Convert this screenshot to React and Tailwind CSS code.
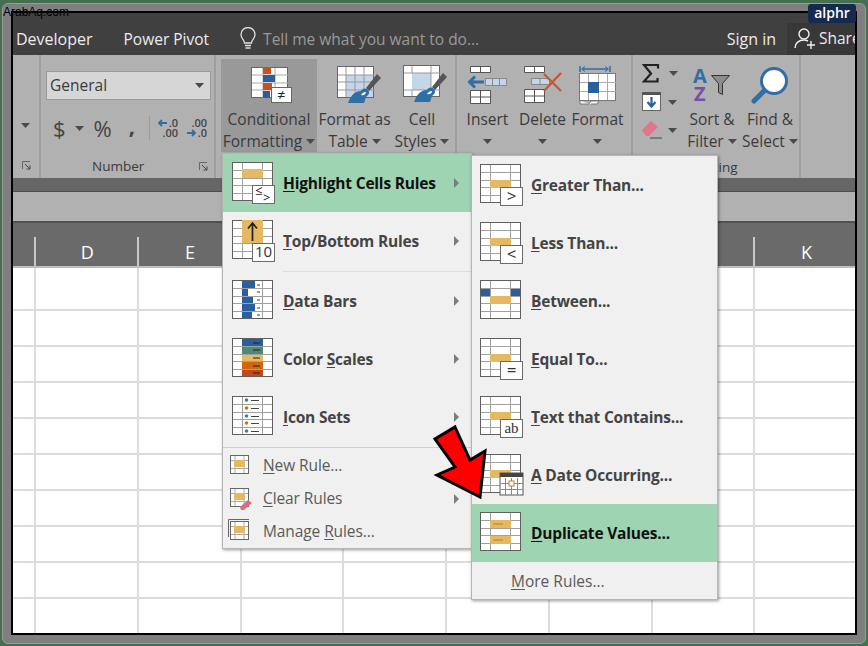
const columns = ['C', 'D', 'E', 'F', 'G', 'H', 'I', 'J', 'K']
const rows = Array.from({ length: 10 })
const ORANGE = '#e5b863'
const BLUE = '#2a5f9e'

function Caret({ className = '' }) {
  return (
    <svg width="9" height="5" viewBox="0 0 9 5" className={className}>
      <path d="M0 0h9L4.500 5z" fill="#4a4a4a" />
    </svg>
  )
}

function Launcher({ className = '' }) {
  return (
    <svg width="9" height="9" viewBox="0 0 9 9" className={className}>
      <path d="M.5 8V.5H8" fill="none" stroke="#666" />
      <path d="M3 3l5 5M8 4.500V8H4.500" fill="none" stroke="#444" />
    </svg>
  )
}

// spreadsheet thumbnail used by every menu row
function Sheet({ children }) {
  return (
    <svg width="44" height="42" viewBox="0 0 44 42" className="shrink-0">
      <rect x=".5" y=".5" width="40" height="38" fill="#fff" />
      <path d="M10.500 1v38M30.500 1v38M1 8.500h40M1 16.500h40M1 23.500h40M1 31.500h40" stroke="#a0a0a0" fill="none" />
      <rect x=".5" y=".5" width="40" height="38" fill="none" stroke="#5f5f5f" />
      {children}
    </svg>
  )
}

function Badge({ label, size = 15, family = 'Open Sans', dy = 0 }) {
  return (
    <g>
      <rect x="20.500" y="23.500" width="22" height="18" fill="#fff" stroke="#6b6b6b" />
      <text x="31.500" y={37 + dy} textAnchor="middle" fontSize={size} fontFamily={family} fill="#333">{label}</text>
    </g>
  )
}

const Bar = ({ y = 16, h = 8 }) => <rect x="10" y={y} width="21" height={h} fill={ORANGE} />

const icons = {
  highlight: (
    <Sheet>
      <Bar y={7} h={9} />
      <rect x="20.500" y="23.500" width="22" height="18" fill="#fff" stroke="#6b6b6b" />
      <text x="23" y="33" fontSize="13" fontFamily="Open Sans" fill="#222">≤</text>
      <text x="31" y="40" fontSize="13" fontFamily="Open Sans" fill="#222">&gt;</text>
    </Sheet>
  ),
  top: (
    <Sheet>
      <rect x="10" y="0" width="21" height="23" fill={ORANGE} />
      <path d="M20.500 21V4M16 8.500L20.500 3l4.500 5.500" stroke="#222" strokeWidth="1.700" fill="none" />
      <Badge label="10" size={15} />
    </Sheet>
  ),
  bars: (
    <Sheet>
      <rect x="10" y="1" width="13" height="7" fill={BLUE} />
      <rect x="10" y="9" width="6" height="7" fill={BLUE} />
      <rect x="10" y="17" width="11" height="6" fill={BLUE} />
      <rect x="10" y="24" width="13" height="7" fill={BLUE} />
      <rect x="10" y="32" width="10" height="6" fill={BLUE} />
      <path d="M25 5h3M25 12h3M25 20h3M25 28h3M25 35h3" stroke="#333" />
    </Sheet>
  ),
  scales: (
    <Sheet>
      <rect x="10" y="1" width="21" height="7" fill={BLUE} />
      <rect x="10" y="9" width="21" height="7" fill="#4b8a75" />
      <rect x="10" y="17" width="21" height="6" fill={ORANGE} />
      <rect x="10" y="24" width="21" height="7" fill="#d2660f" />
      <rect x="10" y="32" width="21" height="6" fill="#bf4a20" />
      <path d="M21 5h7M21 12h7M21 20h7M21 28h7M21 35h7" stroke="#222" />
    </Sheet>
  ),
  sets: (
    <Sheet>
      {[4, 12, 20, 27, 35].map((y, i) => (
        <g key={y}>
          <circle cx="14.500" cy={y} r="1.800" fill={i % 2 ? '#c9741b' : '#3f8a6d'} />
          <path d={`M19 ${y + 0.5}h8`} stroke="#444" />
        </g>
      ))}
    </Sheet>
  ),
  greater: (
    <Sheet>
      <Bar />
      <Badge label=">" size={17} dy={1} />
    </Sheet>
  ),
  less: (
    <Sheet>
      <Bar />
      <Badge label="<" size={17} dy={1} />
    </Sheet>
  ),
  between: (
    <Sheet>
      <rect x="1" y="9" width="9" height="7" fill={BLUE} />
      <rect x="31" y="9" width="9" height="7" fill={BLUE} />
      <Bar />
    </Sheet>
  ),
  equal: (
    <Sheet>
      <Bar />
      <Badge label="=" size={17} dy={1} />
    </Sheet>
  ),
  contains: (
    <Sheet>
      <Bar />
      <Badge label="ab" size={15} family="Liberation Serif" />
    </Sheet>
  ),
  date: (
    <Sheet>
      <Bar />
      <rect x="20" y="19" width="23" height="22" fill="#fff" stroke="#555" />
      <rect x="20" y="19" width="23" height="4" fill="#444" />
      <path d="M25.500 24v17M31.500 24v17M37.500 24v17M21 29.500h22M21 35.500h22" stroke="#888" />
      <rect x="29" y="27" width="5" height="5" fill="#fff" stroke="#d2762a" />
    </Sheet>
  ),
  duplicate: (
    <Sheet>
      <Bar y={8} />
      <Bar y={24} />
      <path d="M13 12h10M13 28h10" stroke="#a98238" />
    </Sheet>
  ),
}

function SmallSheet({ variant }) {
  return (
    <svg width="26" height="26" viewBox="0 0 26 26" className="shrink-0">
      {variant === 'manage' && <path d="M.5 18V.5H21" fill="none" stroke="#666" />}
      <rect x="2.500" y="2.500" width="18" height="18" fill="#fff" stroke="#666" />
      <path d="M7 3v17M16 3v17M3 7.500h17M3 15.500h17" stroke="#aaa" fill="none" />
      <rect x="6" y="7" width="11" height="7" fill={ORANGE} />
      {variant === 'clear' && <path d="M12 21l8-7 4 3-8 7h-3z" fill="#dc6c80" />}
    </svg>
  )
}

function MenuRow({ icon, hotkey, before = '', rest, arrow, active, sub }) {
  return (
    <div className={`flex h-[58px] shrink-0 items-center ${sub ? 'pl-[8px]' : 'pl-[9px]'} ${active ? 'bg-[#9fd4b2] text-[#111]' : 'text-[#444]'}`}>
      {icons[icon]}
      <span className="ml-[7px] mt-[2px] text-[15.5px] font-bold tracking-[-0.2px]">
        {before}<u className="underline-offset-2">{hotkey}</u>{rest}
      </span>
      {arrow && <span className="ml-auto mr-[12px] h-0 w-0 border-y-[5px] border-l-[5px] border-y-transparent border-l-[#7c7c7c]" />}
    </div>
  )
}

function SmallRow({ variant, hotkey, before = '', rest, arrow }) {
  return (
    <div className="flex h-[33px] shrink-0 items-center pl-[5px] text-[15.5px] text-[#5a5a5a]">
      <SmallSheet variant={variant} />
      <span className="ml-[9px] tracking-[-0.1px]">{before}<u className="underline-offset-2">{hotkey}</u>{rest}</span>
      {arrow && <span className="ml-auto mr-[12px] h-0 w-0 border-y-[5px] border-l-[5px] border-y-transparent border-l-[#7c7c7c]" />}
    </div>
  )
}

function RibbonButton({ icon, first, second, className = '', iconClass = '', active }) {
  return (
    <div className={`flex h-[93px] flex-col items-center text-[15.5px] leading-[22px] text-[#3a3a3a] ${active ? 'bg-[#999999]' : ''} ${className}`}>
      <div className={`flex h-[50px] w-full items-center justify-center pt-[3px] ${iconClass}`}>{icon}</div>
      <span className="whitespace-nowrap">{first}</span>
      <span className="flex h-[22px] items-center gap-[4px] whitespace-nowrap">
        {second}
        <Caret />
      </span>
    </div>
  )
}

const CondIcon = (
  <svg width="42" height="37" viewBox="0 0 42 37">
    <rect x=".5" y=".5" width="36" height="30" fill="#fff" stroke="#666" />
    <path d="M12 1v30M24 1v30M1 8h36M1 16h36M1 23h36" stroke="#aaa" />
    <rect x="12" y="0" width="8" height="7" fill="#c8511f" />
    <rect x="12" y="8" width="12" height="7" fill={BLUE} />
    <rect x="12" y="16" width="9" height="7" fill="#c8511f" />
    <rect x="12" y="24" width="7" height="7" fill={BLUE} />
    <rect x="20.500" y="20.500" width="20" height="15" fill="#fff" stroke="#666" />
    <text x="30.500" y="33" textAnchor="middle" fontSize="14" fontFamily="Open Sans" fill="#222">≠</text>
  </svg>
)

const Brush = () => (
  <g>
    <path d="M40 8L29 22l3 3 12-13z" fill="#555" />
    <path d="M11 37c3-8 7-12 13-12 2-3 5-3 7-1 2 2 1 5-2 7l-2 6z" fill="#2f6ea6" />
    <path d="M24 29c1-2 3-3 5-3 0 2-2 4-5 3z" fill="#fff" />
  </g>
)

const TableIcon = (
  <svg width="44" height="38" viewBox="0 0 44 38">
    <rect x=".5" y=".5" width="36" height="31" fill="#fff" stroke="#666" />
    <rect x="9" y="9" width="27" height="22" fill="#c4d6ea" />
    <path d="M9 1v30M18 1v30M27 1v30M1 9h36M1 16h36M1 24h36" stroke="#999" />
    <Brush />
  </svg>
)

const CellIcon = (
  <svg width="44" height="40" viewBox="0 0 44 40">
    <rect x=".5" y=".5" width="36" height="31" fill="#fff" stroke="#666" />
    <rect x="9" y="8" width="19" height="17" fill="#c4d6ea" />
    <path d="M1 8h36M1 25h36M9 1v7M28 1v30M9 25v6" stroke="#999" />
    <Brush />
  </svg>
)

const InsertIcon = (
  <svg width="42" height="40" viewBox="0 0 42 40">
    <path d="M3.500 1.500h20v6h-20zM13.500 1.500v6M3.500 25.500h20v13h-20zM13.500 25.500v13M3.500 32h20" fill="#fff" stroke="#555" />
    <path d="M18.500 13.500h21v7h-21zM25.500 13.500v7M32.500 13.500v7" fill="#c4d6ea" stroke="#888" />
    <path d="M17 17H3M8 11.500L2.500 17 8 22.500" fill="none" stroke="#2f6ea6" strokeWidth="3" />
  </svg>
)

const DeleteIcon = (
  <svg width="40" height="40" viewBox="0 0 40 40">
    <path d="M1.500 1.500h20v6h-20zM11.500 1.500v6M1.500 24.500h20v13h-20zM11.500 24.500v13M1.500 31h20" fill="#fff" stroke="#555" />
    <path d="M8.500 13.500h18v6h-18zM17 13.500v6" fill="#c4d6ea" stroke="#888" />
    <path d="M21 9l17 17M38 8L21 26" stroke="#c9562a" strokeWidth="2.200" fill="none" />
  </svg>
)

const FormatIcon = (
  <svg width="38" height="40" viewBox="0 0 38 40">
    <path d="M1 1v6M31 1v6M3 4h26" stroke="#2f6ea6" strokeWidth="1.500" fill="none" />
    <path d="M6 1.500L2.500 4 6 6.500M26 1.500L29.500 4 26 6.500" stroke="#2f6ea6" fill="none" />
    <rect x=".5" y="8.500" width="36" height="27" fill="#fff" stroke="#777" />
    <path d="M9.500 9v26M19.500 9v26M28.500 9v26M1 17.500h36M1 26.500h36" stroke="#aaa" />
    <rect x="9" y="17" width="11" height="11" fill={BLUE} />
    <path d="M1 36v3h9l2-3h8l-2 3H12" fill="#fff" stroke="#777" />
  </svg>
)

const SigmaIcon = (
  <svg width="18" height="19" viewBox="0 0 18 19">
    <path d="M1 1h15v3.500M15 1H2l7 8.500L2 17.500h13.500V14" fill="none" stroke="#222" strokeWidth="2.200" />
  </svg>
)

const FillIcon = (
  <svg width="20" height="20" viewBox="0 0 20 20">
    <rect x=".5" y=".5" width="18" height="18" fill="#fff" stroke="#666" />
    <rect x="0" y="0" width="19" height="3" fill="#555" />
    <path d="M9.500 5v9M5.500 10l4 4.500 4-4.500" stroke="#2a5f9e" strokeWidth="2.200" fill="none" />
  </svg>
)

const EraserIcon = (
  <svg width="20" height="18" viewBox="0 0 20 18">
    <path d="M0 9l9-9 7 6-9 9H4z" fill="#e0758c" />
    <path d="M8 17h12" stroke="#444" />
  </svg>
)

const SortIcon = (
  <svg width="38" height="36" viewBox="0 0 38 36">
    <text x="0" y="16" fontSize="20" fontWeight="700" fontFamily="Open Sans" fill="#2f6ea6">A</text>
    <text x="1" y="34" fontSize="20" fontWeight="700" fontFamily="Open Sans" fill="#7d4ea8">Z</text>
    <path d="M18.500 8.500h18l-7 8v11l-4-2v-9z" fill="#8d8d8d" stroke="#333" />
  </svg>
)

const FindIcon = (
  <svg width="38" height="38" viewBox="0 0 38 38">
    <path d="M14 24L3 35" stroke="#2f6ea6" strokeWidth="5" strokeLinecap="round" />
    <circle cx="23" cy="15" r="12.500" fill="#fff" stroke="#2f6ea6" strokeWidth="3" />
  </svg>
)

function Decimal({ top, bottom, flip }) {
  return (
    <svg width="22" height="21" viewBox="0 0 22 21">
      <text x="21" y="9" textAnchor="end" fontSize="11" fontWeight="600" fontFamily="Open Sans" fill="#444">{top}</text>
      <text x="21" y="19" textAnchor="end" fontSize="11" fontWeight="600" fontFamily="Open Sans" fill="#444">{bottom}</text>
      <path d={flip ? 'M1 15h8M6 12l3 3-3 3' : 'M10 5H2M5 2L2 5l3 3'} stroke="#2f6ea6" strokeWidth="1.800" fill="none" />
    </svg>
  )
}

function Ribbon() {
  return (
    <div className="flex h-[123px] shrink-0 bg-[#b1b1b1] text-[#3a3a3a]">
      <div className="flex w-[28px] flex-col items-end border-r-2 border-[#9e9e9e] pr-[9px]">
        <Caret className="mt-[68px]" />
        <Launcher className="mt-[33px] -mr-[1px]" />
      </div>

      <div className="flex w-[175px] flex-col border-r-2 border-[#9e9e9e] pl-[5px]">
        <div className="mt-[16px] flex h-[29px] w-[165px] items-center justify-between border border-[#9a9a9a] bg-[#d6d6d6] pl-[3px] pr-[6px] text-[15.5px]">
          General
          <Caret />
        </div>
        <div className="mt-[10px] flex h-[36px] items-center text-[#444]">
          <span className="ml-[7px] text-[22px]">$</span>
          <Caret className="ml-[9px]" />
          <span className="ml-[10px] text-[22px]">%</span>
          <span className="ml-[17px] -mt-[5px] text-[22px] font-bold">,</span>
          <span className="ml-[14px] h-[24px] w-px bg-[#999]" />
          <span className="ml-[7px]"><Decimal top=".0" bottom=".00" /></span>
          <span className="ml-[7px]"><Decimal top=".00" bottom=".0" flip /></span>
        </div>
        <div className="mt-[10px] flex items-center text-[13.5px]">
          <span className="ml-[46px]">Number</span>
          <Launcher className="ml-auto mr-[6px]" />
        </div>
      </div>

      <div className="flex w-[241px] border-r-2 border-[#9e9e9e] pl-[5px] pt-[4px]">
        <RibbonButton active className="w-[96px]" iconClass="pl-[5px]" icon={CondIcon} first="Conditional" second="Formatting" />
        <RibbonButton className="w-[75px]" iconClass="pl-[8px]" icon={TableIcon} first="Format as" second="Table" />
        <RibbonButton className="w-[60px]" iconClass="pl-[6px]" icon={CellIcon} first="Cell" second="Styles" />
      </div>

      <div className="flex w-[176px] border-r-2 border-[#9e9e9e] pl-[3px] pt-[4px]">
        <RibbonButton className="w-[55px]" icon={InsertIcon} first="Insert" second="" />
        <RibbonButton className="w-[55px]" icon={DeleteIcon} first="Delete" second="" />
        <RibbonButton className="w-[55px]" icon={FormatIcon} first="Format" second="" />
      </div>

      <div className="flex w-[168px] flex-col border-r-2 border-[#9e9e9e]">
        <div className="flex h-[97px] pt-[4px]">
          <div className="ml-[9px] flex w-[38px] flex-col">
            <div className="mt-[4px] flex h-[20px] items-center gap-[9px]">{SigmaIcon}<Caret /></div>
            <div className="mt-[9px] flex h-[20px] items-center gap-[6px]">{FillIcon}<Caret /></div>
            <div className="mt-[9px] flex h-[18px] items-center gap-[6px]">{EraserIcon}<Caret /></div>
          </div>
          <RibbonButton className="ml-[2px] w-[60px]" icon={SortIcon} first="Sort &" second="Filter" />
          <RibbonButton className="w-[56px]" icon={FindIcon} first="Find &" second="Select" />
        </div>
        <div className="mt-[5px] text-center text-[13.5px]">Editing</div>
      </div>
    </div>
  )
}

function Sheetgrid() {
  return (
    <div className="min-h-0 flex-1 overflow-hidden bg-white">
      {rows.map((_, i) => (
        <div key={i} className={`grid grid-cols-[23px_repeat(8,102.75px)] ${i === 0 ? 'h-[43px]' : 'h-[36px]'}`}>
          {columns.map((c) => (
            <div key={c} className="border-b-2 border-r-2 border-[#dcdcdc]" />
          ))}
        </div>
      ))}
    </div>
  )
}

export default function App() {
  return (
    <div className="relative h-[646px] w-[868px] overflow-hidden bg-[#44704f] pb-[2px] pl-[2px] pr-[2px] pt-[3px] font-['Open_Sans',sans-serif]">
      <div className="h-full rounded-[6px] border border-[#9a9a9a] bg-[#7f7f7f] pb-[8px] pl-[8px] pr-[8px] pt-[7px]">
        <div className="flex h-full flex-col overflow-hidden border-2 border-black bg-white">
          {/* title bar */}
          <div className="flex h-[42px] shrink-0 items-center bg-[#404040] pt-[10px] text-[16px] text-[#ececec]">
            <span className="ml-[3px]">Developer</span>
            <span className="ml-[31px] mt-[1px] text-[15.5px]">Power Pivot</span>
            <svg width="18" height="24" viewBox="0 0 18 24" className="ml-[30px]">
              <path d="M5.500 16c0-3-3.500-4.500-3.500-8.500a7 7 0 0 1 14 0c0 4-3.500 5.500-3.500 8.500z" fill="none" stroke="#e0e0e0" strokeWidth="1.300" />
              <path d="M6 18.500h6M6.500 21h5" stroke="#e0e0e0" strokeWidth="1.300" />
            </svg>
            <span className="ml-[6px] mt-[1px] text-[15.5px] text-[#9a9a9a]">Tell me what you want to do...</span>
            <span className="ml-auto">Sign in</span>
            <div className="ml-[11px] flex h-[32px] w-[68px] items-center self-end overflow-hidden bg-[#383838] pl-[7px]">
              <svg width="24" height="24" viewBox="0 0 24 24" className="shrink-0">
                <circle cx="10" cy="7" r="5" fill="none" stroke="#f0f0f0" strokeWidth="1.400" />
                <path d="M1 21c0-5 4-8 9-8 2 0 3 .5 4 1M17 14v8M13 18h8" fill="none" stroke="#f0f0f0" strokeWidth="1.400" />
              </svg>
              <span className="ml-[1px] whitespace-nowrap text-[15.5px]">Share</span>
            </div>
          </div>

          <Ribbon />

          <div className="h-[14px] shrink-0 border-b border-[#4d4d4d] bg-[#666666]" />
          <div className="h-[31px] shrink-0 border-b-2 border-[#505050] bg-[#b1b1b1]" />

          {/* column headers */}
          <div className="grid h-[45px] shrink-0 grid-cols-[23px_repeat(8,102.75px)] border-b-2 border-[#bdbdbd] bg-[#6a6a6a] text-[18px] text-white">
            {columns.map((c, i) => (
              <div key={c} className="flex">
                <span className="flex flex-1 items-end justify-center pl-[2px]">{i > 0 ? c : ''}</span>
                <span className="h-[29px] w-[2px] self-end bg-[#c8c8c8]" />
              </div>
            ))}
          </div>
          <Sheetgrid />
        </div>
      </div>

      {/* Conditional Formatting menu */}
      <div className="absolute left-[222px] top-[153px] flex h-[396px] w-[250px] flex-col border border-[#b5b5b5] bg-[#f0f0f0] shadow-[1px_1px_3px_rgba(0,0,0,0.4)]">
        <MenuRow active arrow icon="highlight" hotkey="H" rest="ighlight Cells Rules" />
        <MenuRow arrow icon="top" hotkey="T" rest="op/Bottom Rules" />
        <div className="ml-[60px] h-[2px] shrink-0 border-b border-[#dcdcdc]" />
        <MenuRow arrow icon="bars" hotkey="D" rest="ata Bars" />
        <MenuRow arrow icon="scales" before="Color " hotkey="S" rest="cales" />
        <MenuRow arrow icon="sets" hotkey="I" rest="con Sets" />
        <div className="my-[1px] h-px shrink-0 bg-[#cfcfcf]" />
        <SmallRow variant="new" hotkey="N" rest="ew Rule..." />
        <SmallRow arrow variant="clear" hotkey="C" rest="lear Rules" />
        <SmallRow variant="manage" before="Manage " hotkey="R" rest="ules..." />
      </div>

      {/* Highlight Cells Rules submenu */}
      <div className="absolute left-[471px] top-[155px] flex h-[445px] w-[247px] flex-col border border-[#b5b5b5] bg-[#f0f0f0] shadow-[1px_1px_3px_rgba(0,0,0,0.4)]">
        <MenuRow sub icon="greater" hotkey="G" rest="reater Than..." />
        <MenuRow sub icon="less" hotkey="L" rest="ess Than..." />
        <MenuRow sub icon="between" hotkey="B" rest="etween..." />
        <MenuRow sub icon="equal" hotkey="E" rest="qual To..." />
        <MenuRow sub icon="contains" hotkey="T" rest="ext that Contains..." />
        <MenuRow sub icon="date" hotkey="A" rest=" Date Occurring..." />
        <MenuRow sub active icon="duplicate" hotkey="D" rest="uplicate Values..." />
        <div className="flex h-[36px] items-center pl-[39px] pt-[4px] text-[15.5px] text-[#5a5a5a]">
          <span><u className="underline-offset-2">M</u>ore Rules...</span>
        </div>
      </div>

      {/* red arrow callout */}
      <svg width="60" height="80" viewBox="430 422 60 80" className="absolute left-[430px] top-[422px]">
        <path d="M455 427L470 460 485 451 480 497 437 475 455 467 435 439z" fill="#ff0000" stroke="#000" strokeWidth="3" strokeLinejoin="miter" />
      </svg>

      {/* watermarks */}
      <span className="absolute left-[3px] top-[3px] font-['Liberation_Sans',sans-serif] text-[12px] text-black">ArabAq.com</span>
      <span className="absolute left-[808px] top-[4px] flex h-[19px] w-[48px] items-center justify-center rounded-[3px] bg-[#16294f] pb-[2px] text-[14px] font-semibold text-white">alphr</span>
    </div>
  )
}
